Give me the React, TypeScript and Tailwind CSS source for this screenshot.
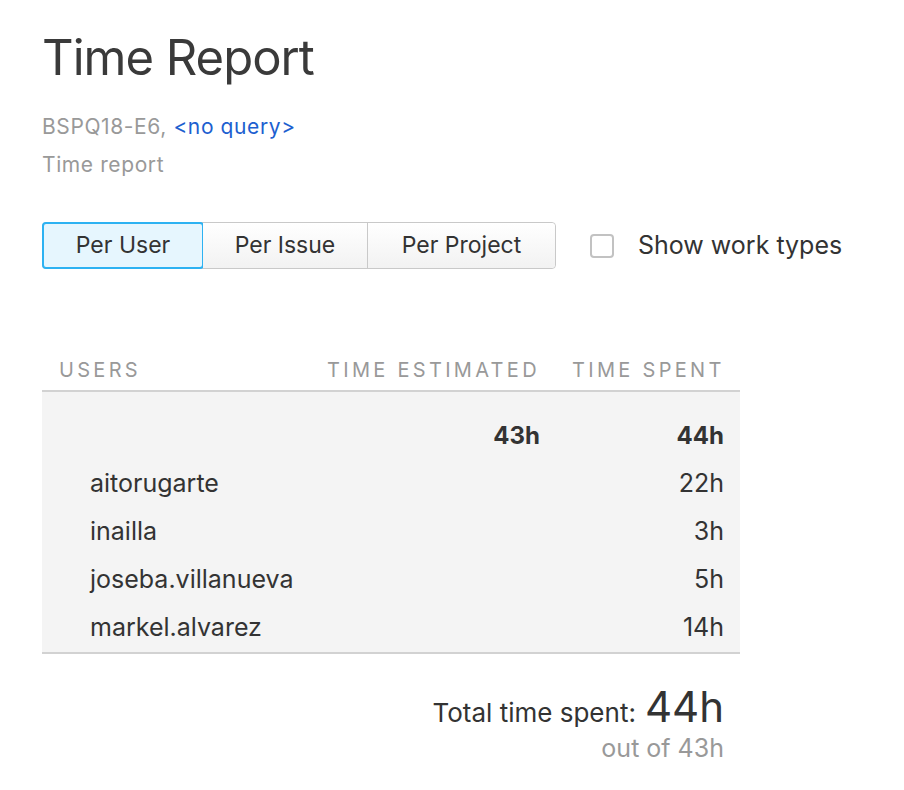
import React, { useState } from 'react';

const rows = [
  { user: 'aitorugarte', estimated: '', spent: '22h' },
  { user: 'inailla', estimated: '', spent: '3h' },
  { user: 'joseba.villanueva', estimated: '', spent: '5h' },
  { user: 'markel.alvarez', estimated: '', spent: '14h' },
];

const tabs = ['Per User', 'Per Issue', 'Per Project'];

export default function App() {
  const [active, setActive] = useState(0);
  const [showTypes, setShowTypes] = useState(false);

  return (
    <div className="min-h-screen bg-white pl-[42px] pt-[26px] text-[#333] font-['Inter','Liberation_Sans',sans-serif]">
      <h1 className="text-[49px] leading-[64px] tracking-[-1px] text-[#3a3a3a]">Time Report</h1>

      <div className="mt-[24px] text-[21px] leading-[26px] tracking-[0.6px] text-[#999]">
        BSPQ18-E6, <a className="text-[#1d5fd0]">&lt;no query&gt;</a>
      </div>
      <div className="mt-[12px] text-[21px] leading-[26px] tracking-[0.6px] text-[#999]">Time report</div>

      <div className="mt-[44px] flex items-center">
        <div className="flex h-[47px] rounded-[4px] border border-[#c9c9c9]">
          {tabs.map((t, i) => (
            <button
              key={t}
              onClick={() => setActive(i)}
              className={
                i === active
                  ? 'w-[162px] -m-px h-[47px] rounded-[4px] border-2 border-[#2db2f2] bg-[#e6f6fe] text-[23px] text-[#333]'
                  : i === 1
                  ? 'w-[165px] border-r border-[#c9c9c9] bg-gradient-to-b from-white to-[#f2f2f2] text-[23px] text-[#333]'
                  : 'w-[187px] rounded-r-[4px] bg-gradient-to-b from-white to-[#f2f2f2] text-[23px] text-[#333]'
              }
            >
              {t}
            </button>
          ))}
        </div>

        <label className="ml-[34px] flex items-center cursor-pointer">
          <input
            type="checkbox"
            checked={showTypes}
            onChange={() => setShowTypes(!showTypes)}
            className="h-[24px] w-[24px] appearance-none rounded-[4px] border-2 border-[#c2c2c2] bg-white"
          />
          <span className="ml-[24px] text-[25px] text-[#333]">Show work types</span>
        </label>
      </div>

      <div className="mt-[77px] w-[698px]">
        <div className="grid grid-cols-[269px_245px_184px] h-[46px] items-end pb-[8px] border-b-2 border-[#d2d2d2] text-[20px] leading-[24px] tracking-[3.3px] text-[#999]">
          <div className="pl-[17px]">USERS</div>
          <div className="pl-[16px]">TIME ESTIMATED</div>
          <div className="pl-[16px]">TIME SPENT</div>
        </div>

        <div className="bg-[#f4f4f4] pt-[20px] border-b-2 border-[#d2d2d2]">
          <div className="grid grid-cols-[269px_245px_184px] h-[48px] items-center text-[24px] font-bold text-[#333]">
            <div />
            <div className="pr-[16px] text-right">43h</div>
            <div className="pr-[16px] text-right">44h</div>
          </div>
          {rows.map((r) => (
            <div key={r.user} className="grid grid-cols-[269px_245px_184px] h-[48px] items-center text-[25px] text-[#333]">
              <div className="pl-[48px]">{r.user}</div>
              <div className="pr-[16px] text-right">{r.estimated}</div>
              <div className="pr-[16px] text-right">{r.spent}</div>
            </div>
          ))}
        </div>

        <div className="mt-[29px] pr-[16px] text-right">
          <div className="flex items-baseline justify-end gap-[9px]">
            <span className="text-[26px] text-[#333]">Total time spent:</span>
            <span className="text-[42px] leading-[48px] text-[#333]">44h</span>
          </div>
          <div className="text-[25px] leading-[32px] text-[#999]">out of 43h</div>
        </div>
      </div>
    </div>
  );
}
